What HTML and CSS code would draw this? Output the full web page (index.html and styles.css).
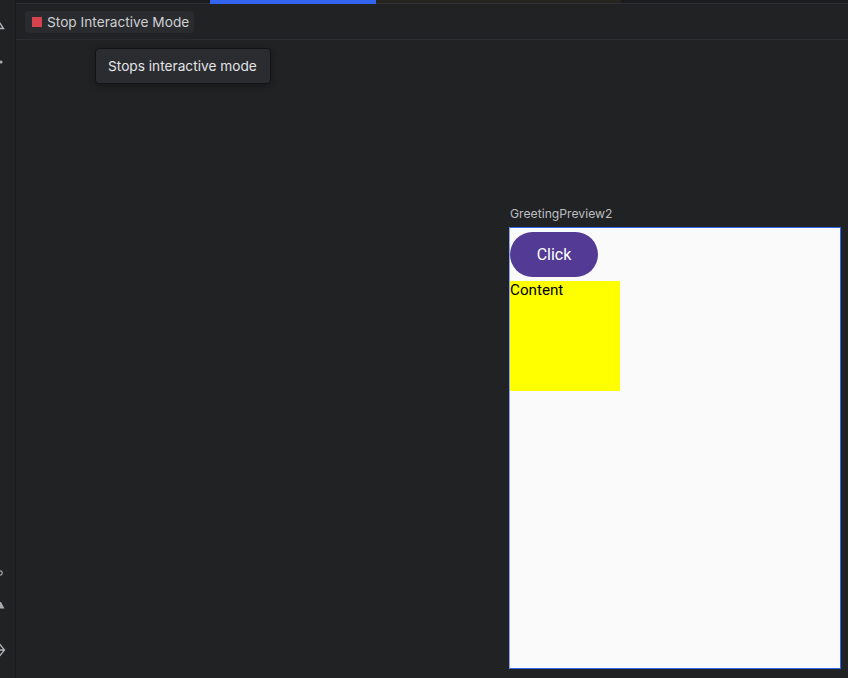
FILE: index.html
```html
<!DOCTYPE html>
<html lang="en">
<head>
<meta charset="utf-8">
<title>Interactive Preview</title>
<link rel="stylesheet" href="styles.css">
</head>
<body>
<div class="app">
  <aside class="rail">
    <div class="rail-top">
      <svg class="rail-icon" width="15" height="14" viewBox="0 0 15 14"><path d="M-3.5 12.5 L-0.5 6.5 L3.5 12.5 Z" fill="none" stroke="#b4b6ba" stroke-width="1.4"/></svg>
      <svg class="rail-icon" width="15" height="6" viewBox="0 0 15 6"><circle cx="1" cy="3" r="1.6" fill="#a8aaae"/></svg>
    </div>
    <div class="rail-bottom">
      <svg class="rail-icon icon-ring" width="15" height="8" viewBox="0 0 15 8"><circle cx="0" cy="4" r="2.2" fill="none" stroke="#a8aaae" stroke-width="1.2"/></svg>
      <svg class="rail-icon icon-tri" width="15" height="12" viewBox="0 0 15 12"><path d="M-1 2 L1 2 L4.5 8.5 L-1 8.5 Z" fill="#a8aaae"/></svg>
      <svg class="rail-icon" width="15" height="16" viewBox="0 0 15 16"><path d="M-2 8 L0 2.5 L4.5 8 L0 13.5 Z M-2 8 H4" fill="none" stroke="#b4b6ba" stroke-width="1.3"/></svg>
    </div>
  </aside>
  <main class="main">
    <div class="tabs">
      <div class="tab-active"></div>
      <div class="tab-brown"></div>
    </div>
    <div class="toolbar">
      <div class="stop-btn"><span class="stop-square"></span><span>Stop Interactive Mode</span></div>
    </div>
    <div class="tooltip">Stops interactive mode</div>
    <div class="canvas">
      <section class="preview">
        <div class="preview-name">GreetingPreview2</div>
        <div class="frame">
          <button class="click-btn" type="button">Click</button>
          <div class="yellow-box">Content</div>
        </div>
      </section>
    </div>
  </main>
</div>
</body>
</html>
```
FILE: styles.css
```css
* { box-sizing: border-box; }
html, body { margin: 0; height: 100%; }
body { background: #212224; overflow: hidden; font-family: Inter, "Liberation Sans", sans-serif; }
.app { display: flex; width: 848px; height: 678px; }
.rail { width: 16px; flex: none; border-right: 1px solid #191a1c; display: flex; flex-direction: column; justify-content: space-between; background: #212224; padding: 16px 0 20px; }
.rail-top { display: flex; flex-direction: column; gap: 29px; }
.rail-bottom { display: flex; flex-direction: column; }
.rail-icon { display: block; }
.icon-tri { margin-top: 23px; }
.icon-tri + .rail-icon { margin-top: 30px; }
.main { flex: 1; position: relative; display: flex; flex-direction: column; min-width: 0; }
.tabs { height: 4px; flex: none; display: flex; padding-left: 194px; background: #1b1c1e; border-bottom: 1px solid #2f3033; }
.tab-active { width: 166px; height: 4px; background: #3366f0; }
.tab-brown { width: 245px; height: 3px; background: #27231e; }
.toolbar { height: 36px; flex: none; display: flex; align-items: center; padding: 1px 0 0 9px; border-bottom: 1px solid #2c2d30; }
.stop-btn { display: flex; align-items: center; gap: 5px; height: 22px; padding: 0 5px 0 7px; border-radius: 4px; background: #2a2b2e; color: #cdcfd3; font-size: 13.7px; }
.stop-square { width: 10px; height: 10px; background: #d6434e; }
.tooltip { position: absolute; left: 79px; top: 48px; height: 36px; padding: 0 13px 0 12px; display: flex; align-items: center; background: #2b2c30; border: 1px solid #121315; border-radius: 4px; color: #e2e4e7; font-size: 13.7px; box-shadow: 0 2px 6px rgba(0,0,0,.3); }
.canvas { flex: 1; padding: 166px 7px 0 493px; min-height: 0; }
.preview { width: 332px; }
.preview-name { height: 21px; padding: 1px 0 0 1px; color: #bcbec2; font-size: 12.2px; line-height: 14px; }
.frame { width: 332px; height: 442px; border: 1px solid #3366f0; border-left-color: #8aa6ee; background: #fafafa; padding-top: 4px; display: flex; flex-direction: column; align-items: flex-start; }
.click-btn { width: 88px; height: 45px; border: none; border-radius: 23px; background: #533a94; color: #fff; font: 400 16px Roboto, sans-serif; padding: 0; }
.yellow-box { width: 110px; height: 110px; margin-top: 4px; background: #ffff00; color: #000; font: 400 15.2px/18px Roboto, sans-serif; }
```
